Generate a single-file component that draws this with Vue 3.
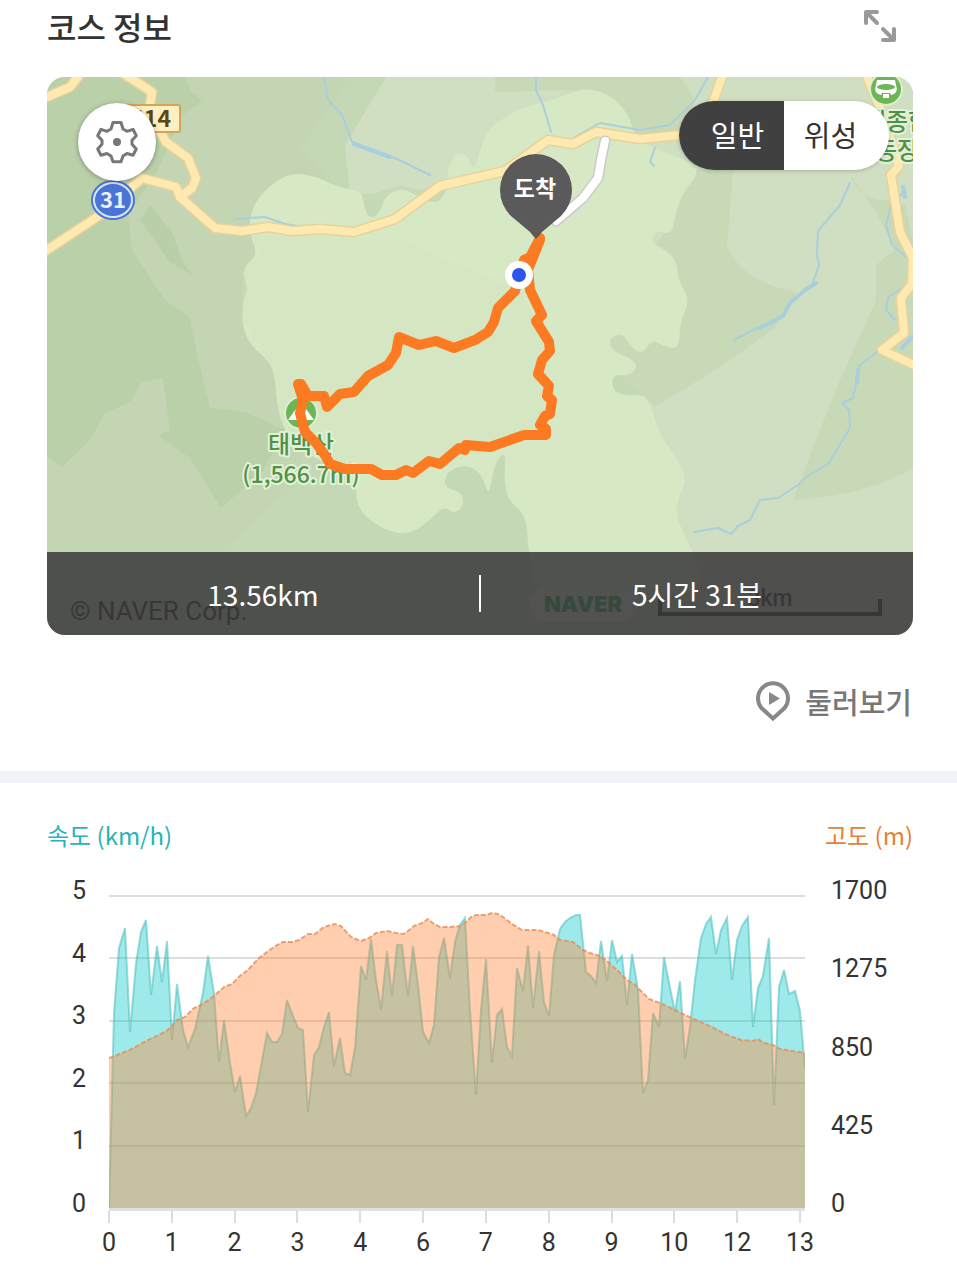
<script setup>
import { ref } from 'vue'

const mapType = ref('normal')

const speedTicks = [5, 4, 3, 2, 1, 0]
const altitudeTicks = [1700, 1275, 850, 425, 0]
const distanceTicks = [0, 1, 2, 3, 4, 6, 7, 8, 9, 10, 12, 13]
const gridLines = [1, 63, 126, 188, 251]

// 지도 영역: 꼭짓점 사이를 부드럽게 잇는 닫힌 경로
function smooth(text) {
    const pts = text.split(' ').map(p => p.split(',').map(Number))
    const mid = (a, b) => `${(a[0] + b[0]) / 2},${(a[1] + b[1]) / 2}`
    let d = `M${mid(pts[pts.length - 1], pts[0])}`
    pts.forEach((p, i) => {
        d += ` Q${p[0]},${p[1]} ${mid(p, pts[(i + 1) % pts.length])}`
    })
    return d + 'Z'
}

const park = smooth('250,235 250,212 264,190 290,172 318,177 340,188 362,190 365,212 372,219 380,212 386,195 402,188 418,196 434,204 446,196 448,165 458,152 468,156 474,172 480,150 488,128 520,108 560,98 580,88 606,92 628,112 636,140 665,152 703,168 683,192 675,215 672,235 655,230 650,242 666,250 677,262 678,280 690,300 680,322 679,350 664,346 652,340 642,354 632,348 622,332 608,340 614,352 630,358 638,366 630,376 612,374 613,392 630,396 645,394 653,410 658,432 682,466 686,482 674,508 684,536 698,560 700,600 535,600 528,545 526,515 508,500 504,480 506,450 494,464 489,498 482,474 466,464 446,472 444,488 462,492 464,506 454,514 444,506 430,520 414,532 396,534 374,524 356,506 357,480 300,450 284,430 277,405 275,375 268,360 250,345 242,325 243,300 248,290 242,268 258,255')

const route = '540,238 530,257 524,260 519,275 515,291 498,308 494,322 488,332 475,340 454,348 436,341 419,345 399,337 396,353 388,365 368,376 354,392 340,394 327,407 324,396 308,396 301,384 298,384 303,400 300,413 305,432 316,443 325,455 330,464 345,469 371,469 382,475 396,475 406,470 413,473 429,461 440,464 459,448 465,450 466,445 490,447 524,435 546,435 546,429 540,425 545,416 550,414 552,400 547,396 549,386 538,374 542,360 550,351 549,342 536,321 542,315 530,290 528,270 540,240'

const roads = [
    'M47,97 L70,87 L78,77',
    'M124,74 L152,92 L149,112 L166,142 L188,158 L196,178 L192,188 L180,197',
    'M44,252 L100,215 L142,178 L176,187 L180,197 L215,228 L242,231 L268,227 L292,231 L320,229 L354,232 L395,219 L440,186 L505,171 L548,140 L573,144 L596,132 L640,139 L680,135 L706,122 L722,77',
    'M866,74 L885,120 L899,166 L891,175 L900,232 L913,258 L912,284 L901,298 L904,333 L882,350 L916,366',
]

const rivers = [
    'M324,77 L328,100 L342,115 L352,142 L395,158 L430,175',
    'M536,77 L536,90 L543,105 L551,132',
    'M575,137 L600,123 L640,130 L670,125 L695,100 L708,77',
    'M655,148 L650,162 L654,166',
    'M850,183 L840,205 L818,231 L817,255 L819,265 L812,285 L792,301 L783,315 L775,322 L755,329 L734,340',
    'M903,193 L891,205 L886,225 L892,245 L910,260 L908,285 L888,297 L886,310 L895,320',
    'M877,352 L860,365 L857,380 L853,398 L842,403 L849,410 L850,428 L828,464 L806,477 L798,485 L778,498 L760,500 L750,520 L738,526 L731,534 L718,528 L694,532',
    'M236,219 L265,217 L285,224 L310,228',
]

// 1km 단위가 아닌 기록 간격 그대로의 그래프 좌표 (696 x 313)
const speed = '0,313 5,118 10,53 16,33 21,137 27,68 32,37 37,25 42,100 48,51 53,87 58,46 63,145 68,89 74,135 79,152 86,134 94,98 99,61 105,98 110,167 115,125 121,168 126,197 131,181 137,221 142,213 147,198 153,166 158,138 163,147 168,147 173,139 178,105 184,121 189,133 194,135 199,217 205,160 210,152 215,132 220,117 225,171 231,143 236,178 241,180 246,153 252,71 257,85 262,44 267,85 272,114 278,56 283,101 288,50 293,50 299,101 304,51 309,90 314,137 320,148 325,130 330,62 335,43 341,83 346,47 351,30 356,23 361,115 367,200 372,115 377,64 383,168 388,120 393,114 398,152 403,161 408,73 414,96 419,50 424,113 430,56 435,107 440,121 445,60 451,34 456,27 461,23 467,20 471,20 477,77 482,81 487,88 492,46 498,86 503,45 508,67 513,61 518,110 523,59 529,95 534,198 539,185 544,118 550,132 555,62 560,88 566,117 571,86 576,164 581,132 586,85 592,43 597,29 602,22 607,59 612,35 618,23 623,85 628,45 633,31 639,22 644,132 649,93 654,81 660,43 665,210 670,92 675,75 680,99 686,96 691,116 696,173'
const altitude = '0,163 6,161 13,158 23,154 37,146 48,141 59,135 68,125 76,122 85,113 94,109 105,101 115,92 123,89 132,80 139,75 149,64 158,57 168,50 174,47 183,47 190,45 199,39 206,39 215,32 225,29 232,31 242,42 249,45 252,46 260,43 267,38 278,36 287,38 294,39 299,36 305,31 313,28 319,24 325,29 331,32 342,32 351,31 357,27 362,22 367,20 377,20 383,18 389,19 394,22 403,29 413,35 429,35 439,38 445,40 451,45 464,47 474,55 481,58 491,61 499,67 508,75 518,85 525,89 533,97 540,104 551,108 564,114 574,119 587,125 603,132 616,139 632,145 644,146 649,144 655,148 664,150 671,154 683,156 696,158'
</script>

<template>
    <main class="page">
        <header class="course-header">
            <h1>코스 정보</h1>
            <button class="expand" type="button" aria-label="확대">
                <svg width="32" height="32" viewBox="0 0 32 32">
                    <path d="M2 13V2h11M3 3l10 10M30 19v11H19M29 29L19 19" />
                </svg>
            </button>
        </header>

        <section class="map">
            <svg class="map-canvas" viewBox="47 77 866 558">
                <rect x="47" y="77" width="866" height="558" fill="#c3d5b2" />
                <path fill="#bad0a9" d="M47,77H186L190,90L202,101L180,117L158,170L128,215L132,250L165,300L190,318L196,350L210,408L245,412L285,430L262,472L221,508L190,458L158,435L170,430L163,378L142,382L130,402L105,413L90,440L62,467L47,456Z" />
                <path fill="#b9cfa8" d="M150,205L172,232L183,262L192,275L170,262L140,220Z" />
                <path fill="#c6d8b6" d="M350,77H913V635H47V552L220,552L300,480L330,180L300,150Z" opacity=".7" />
                <path fill="#d0dec2" d="M386,77H660L500,200L440,190L350,195L345,145Z" />
                <path fill="#d0dec2" d="M640,77H913V635H690L650,405Z" />
                <path fill="#c8d9b7" d="M495,77H680L694,98L690,125L640,145L620,105L570,90L495,92Z" />
                <path fill="#c8d9b7" d="M686,170H733L727,248Q745,283 797,292L775,327Q720,370 655,406L625,380L600,340L665,230Z" />
                <path fill="#c8d9b7" d="M850,175Q860,202 890,200L905,205L913,240V468Q870,495 793,500L816,440L840,380L876,300V265L895,250L875,210Z" />
                <path fill="#c8d9b7" d="M362,200H448V182L420,190L400,185L365,196Z" />
                <path :d="park" fill="#d6e9c4" />
                <path fill="#d0e4bd" opacity=".3" d="M250,235L260,255L243,270L243,320L275,370L280,420L330,468L460,460L545,435L550,350L520,290L400,240Z" />

                <g class="river">
                    <path v-for="d in rivers" :key="d" :d="d" />
                </g>
                <path class="river wide" d="M354,144L390,157M816,283L805,290L790,303L783,316L760,328M858,370L857,382M903,187L905,197M913,336L902,348" />

                <g class="road-edge">
                    <path v-for="d in roads" :key="d" :d="d" />
                </g>
                <g class="road">
                    <path v-for="d in roads" :key="d" :d="d" />
                </g>
                <path class="lane-edge" d="M605,141L601,160L598,178L583,198L556,221" />
                <path class="lane" d="M605,141L601,160L598,178L583,198L556,221" />

                <rect x="118" y="105" width="62" height="27" rx="2" fill="#fdf0c0" stroke="#d3a45c" stroke-width="2" />
                <text class="sign" x="171" y="127" text-anchor="end">414</text>
                <ellipse cx="113" cy="200" rx="22" ry="20" fill="#4a74d6" />
                <ellipse cx="113" cy="200" rx="19" ry="17" fill="none" stroke="#d9e6fb" stroke-width="2" />
                <text class="shield" x="113" y="208" text-anchor="middle">31</text>

                <circle cx="886" cy="89" r="16" fill="#6db555" stroke="#dcefcf" stroke-width="2" />
                <path d="M877 80h18l1 5q3 8-5 10l-1-2h-8l-1 2q-8-2-5-10z" fill="#fff" />
                <path d="M883 94h6v4h-6z" fill="#fff" />
                <ellipse cx="886" cy="87" rx="9" ry="3" fill="#6db555" />
                <g class="place" text-anchor="middle">
                    <text x="886" y="130">태백종합</text>
                    <text x="886" y="159">운동장</text>
                    <text x="301" y="453">태백산</text>
                    <text class="height" x="301" y="483">(1,566.7m)</text>
                </g>
                <circle cx="301" cy="413" r="16" fill="#6db555" stroke="#dcefcf" stroke-width="2" />
                <path d="M301 402L314 420H288Z" fill="#fff" />
                <path d="M301 411L306 419H296Z" fill="#6db555" />

                <polyline class="route" :points="route" />
                <circle cx="519" cy="275" r="14" fill="#fff" />
                <circle cx="519" cy="275" r="7" fill="#2c55ec" />
                <path fill="#5a5a5a" d="M536 239Q533 236 530 232L511 216A36 36 0 1 1 561 216L542 232Q539 236 536 239Z" />
                <text class="pin-label" x="535" y="197" text-anchor="middle">도착</text>

                <text class="copyright" x="70" y="620">© NAVER Corp.</text>
                <rect x="529" y="587" width="108" height="35" rx="17" fill="#fff" fill-opacity=".6" />
                <text class="naver" x="583" y="612" text-anchor="middle">NAVER</text>
                <path d="M660 599V614H880V599" fill="none" stroke="#111" stroke-width="4" />
                <text class="scale" x="770" y="606" text-anchor="middle">3km</text>
            </svg>

            <button class="settings" type="button" aria-label="지도 설정">
                <svg width="44" height="44" viewBox="0 0 44 44">
                    <path d="M18 2.500H26L28 9L32 11.300L38 9.300L41.300 15.700L37 20.300V24.300L41.300 29L38 35.300L32 33.500L28 36L26 41.700H18L16 36L12 33.500L6 35.300L2.700 29L7 24.300V20.300L2.700 15.700L6 9.300L12 11.300L16 9Z" />
                    <circle cx="22" cy="22" r="4" />
                </svg>
            </button>

            <div class="map-type" role="group" aria-label="지도 종류">
                <button type="button" :class="{ active: mapType === 'normal' }" :aria-pressed="mapType === 'normal'" @click="mapType = 'normal'">일반</button>
                <button type="button" :class="{ active: mapType === 'satellite' }" :aria-pressed="mapType === 'satellite'" @click="mapType = 'satellite'">위성</button>
            </div>

            <div class="summary">
                <span>13.56km</span>
                <i></i>
                <span>5시간 31분</span>
            </div>
        </section>

        <div class="explore-row">
            <button class="explore" type="button">
                <svg width="36" height="40" viewBox="0 0 36 40">
                    <path class="outline" d="M18 37.500L6.500 27A15 15 0 1 1 29.500 27Z" />
                    <path class="play" d="M14 11L25 17.500L14 24Z" />
                </svg>
                둘러보기
            </button>
        </div>

        <section class="chart">
            <div class="legend">
                <span class="speed-title">속도 (km/h)</span>
                <span class="altitude-title">고도 (m)</span>
            </div>
            <div class="chart-body">
                <ul class="axis-left">
                    <li v-for="t in speedTicks" :key="t">{{ t }}</li>
                </ul>
                <svg class="plot" viewBox="0 0 696 313" preserveAspectRatio="none">
                    <line v-for="y in gridLines" :key="y" class="grid-line" x1="0" x2="696" :y1="y" :y2="y" />
                    <polygon class="speed-area" :points="`${speed} 696,313`" />
                    <polyline class="speed-line" :points="speed" />
                    <polygon class="altitude-area" :points="`0,313 ${altitude} 696,313`" />
                    <polyline class="altitude-line" :points="altitude" />
                </svg>
                <ul class="axis-right">
                    <li v-for="t in altitudeTicks" :key="t">{{ t }}</li>
                </ul>
                <ul class="axis-bottom">
                    <li v-for="t in distanceTicks" :key="t">{{ t }}</li>
                </ul>
            </div>
        </section>
    </main>
</template>

<style>
body {
    margin: 0;
    background: #fff;
}
</style>

<style scoped>
.page {
    font-family: "Noto Sans CJK KR", sans-serif;
    color: #333;
}

button {
    border: 0;
    padding: 0;
    background: none;
    font: inherit;
    color: inherit;
    cursor: pointer;
}

ul {
    margin: 0;
    padding: 0;
    list-style: none;
}

.course-header {
    display: flex;
    align-items: center;
    justify-content: space-between;
    height: 51px;
    padding: 0 61px 0 47px;
    margin-bottom: 26px;
}

h1 {
    margin: 0;
    font-size: 32px;
    font-weight: 500;
    line-height: 40px;
}

.expand svg {
    display: block;
    fill: none;
    stroke: #999;
    stroke-width: 4px;
    stroke-linecap: round;
    stroke-linejoin: round;
}

/* 지도 */
.map {
    position: relative;
    margin: 0 44px 0 47px;
    border-radius: 18px;
    overflow: hidden;
}

.map-canvas {
    display: block;
    width: 100%;
}

.river,
.road,
.road-edge,
.lane,
.lane-edge,
.route {
    fill: none;
    stroke-linecap: round;
    stroke-linejoin: round;
}

.river {
    stroke: #aacfdc;
    stroke-width: 2px;
}

.wide {
    stroke-width: 4px;
}

.road-edge {
    stroke: #e6d29a;
    stroke-width: 11px;
}

.road {
    stroke: #feeab0;
    stroke-width: 8px;
}

.lane-edge {
    stroke: #ccc8cf;
    stroke-width: 11px;
}

.lane {
    stroke: #fff;
    stroke-width: 8px;
}

.route {
    stroke: #fc7a22;
    stroke-width: 10px;
}

.sign {
    font-size: 23px;
    font-weight: 700;
    fill: #5d4514;
}

.shield {
    font-size: 22px;
    font-weight: 700;
    fill: #e8f1ff;
}

.place {
    font-size: 24px;
    font-weight: 500;
    fill: #4f9346;
    stroke: #e3f1d9;
    stroke-width: 4px;
    stroke-linejoin: round;
    paint-order: stroke;
}

.place .height {
    font-size: 23px;
}

.pin-label {
    font-size: 23px;
    font-weight: 700;
    fill: #fff;
}

.copyright {
    font-family: Roboto, sans-serif;
    font-size: 26px;
    fill: #111;
}

.naver {
    font-family: Inter, sans-serif;
    font-size: 22px;
    font-weight: 900;
    fill: #00a83c;
}

.scale {
    font-family: Roboto, sans-serif;
    font-size: 23px;
    font-weight: 500;
    fill: #111;
}

.settings {
    position: absolute;
    top: 26px;
    left: 31px;
    display: flex;
    align-items: center;
    justify-content: center;
    width: 78px;
    height: 78px;
    border-radius: 50%;
    background: #fff;
    box-shadow: 0 1px 5px rgba(0, 0, 0, .35);
}

.settings path {
    fill: none;
    stroke: #777;
    stroke-width: 3px;
    stroke-linejoin: round;
}

.settings circle {
    fill: #777;
}

.map-type {
    position: absolute;
    top: 24px;
    right: 24px;
    display: flex;
    height: 69px;
    border-radius: 35px;
    overflow: hidden;
    background: #fff;
    box-shadow: 0 1px 4px rgba(0, 0, 0, .2);
    font-size: 29px;
}

.map-type button {
    width: 105px;
    box-sizing: border-box;
    padding: 0 12px 3px 0;
}

.map-type button:first-child {
    padding: 0 0 3px 12px;
}

.map-type .active {
    background: #404040;
    color: #fff;
}

.summary {
    position: absolute;
    right: 0;
    bottom: 0;
    left: 0;
    display: flex;
    align-items: center;
    height: 83px;
    background: rgba(60, 60, 60, .88);
    color: #fff;
    font-size: 28px;
}

.summary span {
    flex: 1;
    text-align: center;
}

.summary i {
    width: 2px;
    height: 37px;
    background: #fff;
}

.explore-row {
    display: flex;
    justify-content: flex-end;
    padding: 42px 45px 46px 47px;
    border-bottom: 12px solid #f1f3f8;
}

.explore {
    display: flex;
    align-items: center;
    gap: 14px;
    height: 48px;
    color: #777;
    font-size: 29px;
    font-weight: 500;
}

.explore .outline {
    fill: none;
    stroke: #888;
    stroke-width: 4px;
}

.explore .play {
    fill: #888;
}

/* 속도 / 고도 그래프 */
.chart {
    padding: 32px 44px 0 47px;
}

.legend {
    display: flex;
    justify-content: space-between;
    margin-bottom: 40px;
    font-size: 24px;
    line-height: 40px;
}

.speed-title {
    color: #28b4b6;
}

.altitude-title {
    color: #e58234;
}

.chart-body {
    display: grid;
    grid-template-columns: 62px 1fr 108px;
    font-family: Roboto, sans-serif;
    font-size: 25px;
    line-height: 30px;
}

.axis-left,
.axis-right {
    display: flex;
    flex-direction: column;
    justify-content: space-between;
    margin: -19px 0 -11px;
}

.axis-left {
    padding-right: 23px;
    text-align: right;
}

.axis-right {
    padding-left: 26px;
}

.plot {
    display: block;
    width: 100%;
    height: 313px;
}

.grid-line {
    stroke: #ddd;
    stroke-width: 2px;
}

.speed-area {
    fill: #00c6c6;
    fill-opacity: .38;
}

.speed-line {
    fill: none;
    stroke: #3fb9b9;
    stroke-opacity: .5;
    stroke-width: 2px;
}

.altitude-area {
    fill: #ff8434;
    fill-opacity: .4;
}

.altitude-line {
    fill: none;
    stroke: #e58f5a;
    stroke-opacity: .8;
    stroke-width: 2px;
    stroke-dasharray: 5 2;
}

.axis-bottom {
    grid-column: 2;
    display: flex;
    justify-content: space-between;
    padding-right: 5px;
    border-top: 3px solid #e0e0e0;
}

.axis-bottom li {
    display: flex;
    flex-direction: column;
    align-items: center;
    width: 0;
}

.axis-bottom li::before {
    content: "";
    width: 2px;
    height: 12px;
    margin-bottom: 5px;
    background: #ddd;
}
</style>
